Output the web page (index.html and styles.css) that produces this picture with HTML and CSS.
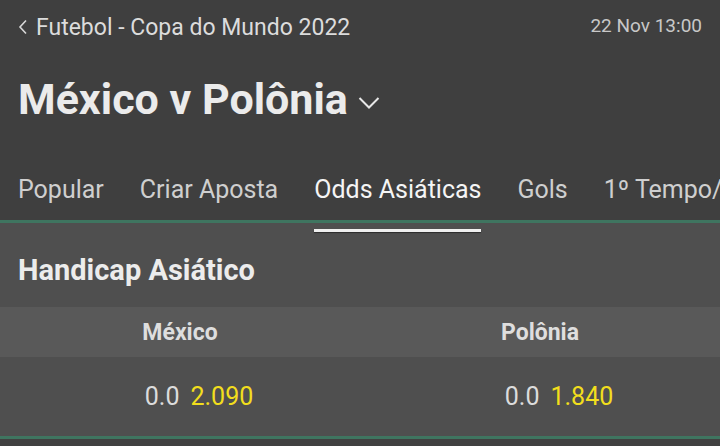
FILE: index.html
```html
<!DOCTYPE html>
<html lang="pt">
<head>
    <meta charset="UTF-8" />
    <title>México v Polônia</title>
    <link rel="stylesheet" href="styles.css">
</head>
<body>

<header class="topo">
    <div class="breadcrumb">
        <a class="voltar" href="#">
            <svg width="10" height="16" viewBox="0 0 10 16"><path d="M8 1.5 L2 8 L8 14.5" fill="none" stroke="#d8d8d8" stroke-width="1.6"/></svg>
            <span>Futebol - Copa do Mundo 2022</span>
        </a>
        <span class="data">22 Nov 13:00</span>
    </div>

    <h1 class="titulo">
        México v Polônia
        <svg class="seta" width="22" height="14" viewBox="0 0 22 14"><path d="M1.5 2 L11 11.5 L20.5 2" fill="none" stroke="#e8e8e8" stroke-width="2"/></svg>
    </h1>

    <nav class="abas">
        <a href="#">Popular</a>
        <a href="#">Criar Aposta</a>
        <a href="#" class="ativa">Odds Asiáticas</a>
        <a href="#">Gols</a>
        <a href="#">1º Tempo/</a>
    </nav>
</header>

<section class="mercado">
    <h2>Handicap Asiático</h2>
    <div class="linha-cabecalho">
        <div class="col">México</div>
        <div class="col">Polônia</div>
    </div>
    <div class="linha-odds">
        <div class="col"><span class="hcp">0.0</span><span class="odd">2.090</span></div>
        <div class="col"><span class="hcp">0.0</span><span class="odd">1.840</span></div>
    </div>
</section>

</body>
</html>
```

FILE: styles.css
```css
body {
    margin: 0;
    font-family: Roboto, "Noto Sans", sans-serif;
    background: #414141;
    color: #e0e0e0;
    overflow: hidden;
}

a {
    color: inherit;
    text-decoration: none;
}

.topo {
    background: #3f3f3f;
    border-bottom: 3px solid #3f7560;
}

.breadcrumb {
    display: flex;
    justify-content: space-between;
    align-items: center;
    padding: 12px 18px 0 18px;
    height: 30px;
}

.voltar {
    display: flex;
    align-items: center;
    gap: 8px;
    font-size: 23px;
    color: #dcdcdc;
}

.data {
    font-size: 19px;
    color: #c8c8c8;
    margin-top: -3px;
}

.titulo {
    display: flex;
    align-items: center;
    gap: 10px;
    margin: 0;
    padding: 33px 18px 0 18px;
    height: 47px;
    font-size: 43px;
    font-weight: bold;
    color: #ebebeb;
}

.seta {
    margin-top: 8px;
}

.abas {
    display: flex;
    gap: 36px;
    padding: 53px 18px 0 18px;
    white-space: nowrap;
    height: 45px;
}

.abas a {
    font-size: 25px;
    color: #cfcfcf;
    position: relative;
    height: 100%;
}

.abas a.ativa {
    color: #f5f5f5;
}

.abas a.ativa::after {
    content: "";
    position: absolute;
    left: 0;
    right: 0;
    top: calc(100% + 9px);
    height: 3px;
    background: #f0f0f0;
    box-shadow: 0 1px 1px #2c2c2c;
    z-index: 1;
}

.mercado {
    background: #4f4f4f;
    border-bottom: 3px solid #3f7560;
}

.mercado h2 {
    margin: 0;
    padding: 30px 18px 0 18px;
    height: 54px;
    font-size: 29px;
    font-weight: bold;
    color: #ececec;
}

.linha-cabecalho {
    display: flex;
    background: #595959;
    height: 50px;
    align-items: center;
}

.linha-cabecalho .col {
    flex: 1;
    text-align: center;
    font-size: 23px;
    font-weight: bold;
    color: #dedede;
}

.linha-odds {
    display: flex;
    height: 79px;
    align-items: center;
}

.linha-odds .col {
    flex: 1;
    display: flex;
    justify-content: center;
    gap: 11px;
    padding-left: 38px;
    font-size: 25px;
}

.hcp {
    color: #dcdcdc;
}

.odd {
    color: #f2de1d;
}
```
